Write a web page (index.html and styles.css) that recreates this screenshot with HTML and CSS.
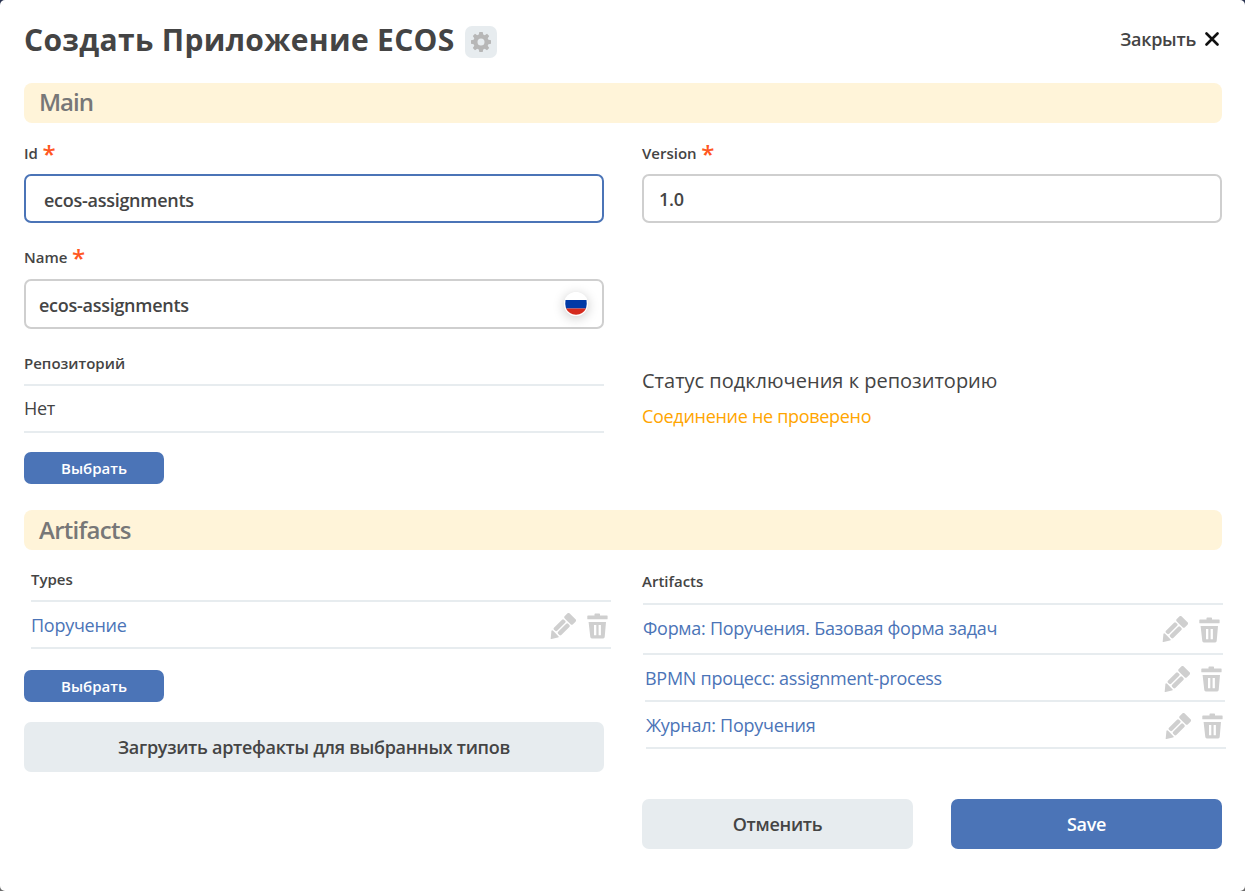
FILE: index.html
```
<!DOCTYPE html>
<html lang="ru">
<head>
<meta charset="utf-8">
<title>Создать Приложение ECOS</title>
<link rel="stylesheet" href="styles.css">
</head>
<body>
<svg class="sprite" width="0" height="0">
  <symbol id="pencil" viewBox="0 0 26 26">
    <g transform="translate(0 26) rotate(-45)" fill="currentColor">
      <path d="M.8.2 6.6-4.6Q8-5.400 8-3.600V3.600Q8 5.400 6.600 4.600L.8.9Q.3.5.8.2Z"/>
      <rect x="9.400" y="-5.200" width="14.200" height="4.500" rx="1.400"/>
      <rect x="9.400" y=".7" width="14.200" height="4.500" rx="1.400"/>
      <rect x="25" y="-5.800" width="7" height="11.600" rx="1.700"/>
    </g>
  </symbol>
  <symbol id="trash" viewBox="0 0 21 26">
    <path fill="currentColor" fill-rule="evenodd" d="M1 2.500H7.500V1.200Q7.500.5 8.200.5H12.300Q13 .5 13 1.200V2.500H20Q20.600 2.500 20.600 3.100V5.700Q20.600 6.300 20 6.300H.9Q.3 6.300.3 5.700V3.100Q.3 2.500 1 2.500ZM1.600 9H19L17.700 24Q17.500 25.400 16.200 25.400H4.800Q3.500 25.400 3.300 24ZM7 12V22.300H9.300V12ZM11.600 12V22.300H13.900V12Z"/>
  </symbol>
</svg>
<main class="modal">
  <header class="header">
    <h1 class="title">Создать Приложение ECOS</h1>
    <button class="gear" aria-label="Настройки">
      <svg width="20" height="20" viewBox="0 0 20 20"><path fill="#b7b7b7" fill-rule="evenodd" d="M8.3 0h3.4l.5 2.6 1.6.7L16 1.8 18.2 4 16.7 6.200l.7 1.600 2.600.5v3.400l-2.600.5-.7 1.600L18.200 16 16 18.200l-2.200-1.500-1.600.7-.5 2.600H8.300l-.5-2.600-1.600-.7L4 18.200 1.800 16l1.500-2.200-.7-1.600L0 11.700V8.300l2.600-.5.7-1.600L1.800 4 4 1.800l2.200 1.500 1.600-.7ZM10 6.500a3.500 3.500 0 1 0 0 7 3.500 3.500 0 1 0 0-7Z"/></svg>
    </button>
    <button class="close">Закрыть
      <svg width="14" height="14" viewBox="0 0 14 14"><path d="M1.500 1.500 12.500 12.500M12.500 1.500 1.500 12.500" stroke="#111" stroke-width="2.600" stroke-linecap="round"/></svg>
    </button>
  </header>

  <h2 class="section section-main">Main</h2>
  <div class="columns columns-main">
    <div class="col">
      <div class="label">Id <span class="req">*</span></div>
      <div class="input input-focus">ecos-assignments</div>
      <div class="label label-name">Name <span class="req">*</span></div>
      <div class="input input-name">ecos-assignments
        <svg class="flag" width="24" height="24" viewBox="0 0 24 24"><circle cx="12" cy="12" r="12" fill="#fff"/><path fill="#0039a6" d="M1.500 8H22.500Q23.300 12.500 22 16.500H2Q.7 12.500 1.500 8Z"/><path fill="#d52b1e" d="M2 16.500H22Q19 22.600 12 22.700 5 22.600 2 16.500Z"/></svg>
      </div>
      <div class="label label-repo">Репозиторий</div>
      <div class="list"><div class="row row-repo">Нет</div></div>
      <button class="btn btn-small">Выбрать</button>
    </div>
    <div class="col">
      <div class="label">Version <span class="req">*</span></div>
      <div class="input input-version">1.0</div>
      <div class="status">
        <div class="status-title">Статус подключения к репозиторию</div>
        <div class="status-value">Соединение не проверено</div>
      </div>
    </div>
  </div>

  <h2 class="section">Artifacts</h2>
  <div class="columns">
    <div class="col">
      <div class="types">
        <div class="label label-types">Types</div>
        <div class="list">
          <div class="row link"><span class="row-text">Поручение</span><svg class="pencil"><use href="#pencil"/></svg><svg class="trash"><use href="#trash"/></svg></div>
        </div>
      </div>
      <button class="btn btn-small btn-types">Выбрать</button>
      <button class="btn btn-wide">Загрузить артефакты для выбранных типов</button>
    </div>
    <div class="col">
      <div class="label label-artifacts">Artifacts</div>
      <div class="list artifacts">
        <div class="row row-first link"><span class="row-text">Форма: Поручения. Базовая форма задач</span><svg class="pencil"><use href="#pencil"/></svg><svg class="trash"><use href="#trash"/></svg></div>
        <div class="row row-second link"><span class="row-text">BPMN процесс: assignment-process</span><svg class="pencil"><use href="#pencil"/></svg><svg class="trash"><use href="#trash"/></svg></div>
        <div class="row row-third link"><span class="row-text">Журнал: Поручения</span><svg class="pencil"><use href="#pencil"/></svg><svg class="trash"><use href="#trash"/></svg></div>
      </div>
      <div class="footer">
        <button class="btn btn-cancel">Отменить</button>
        <button class="btn btn-save">Save</button>
      </div>
    </div>
  </div>
</main>
</body>
</html>
```
FILE: styles.css
```
* { box-sizing: border-box; }
body { margin: 0; background: linear-gradient(#2a3350 50%, #6b6b6b 50%); color: #444; font-family: "Open Sans", sans-serif; }
button { font-family: inherit; border: 0; padding: 0; color: inherit; background: none; }
svg { display: block; flex: none; }
.sprite { position: absolute; }
.modal { height: 891px; padding: 0 23px 0 24px; background: #fff; border-radius: 5px; overflow: hidden; }

.header { display: flex; height: 83px; }
.title { margin: 18px 0 0; font-size: 30px; line-height: 43px; font-weight: 700; letter-spacing: .32px; white-space: nowrap; }
.gear { display: flex; align-items: center; justify-content: center; width: 32px; height: 32px; margin: 26px 0 0 10px; border-radius: 7px; background: #e7ecef; }
.close { display: flex; align-items: center; gap: 9px; height: 24px; margin: 27px 3px 0 auto; font-size: 18px; font-weight: 600; letter-spacing: -.25px; }

.section { height: 40px; margin: 0; padding-left: 15px; border-radius: 8px; background: #fff4d9; color: #777; font-size: 24px; line-height: 39px; font-weight: 600; letter-spacing: -.7px; }
.section-main { line-height: 38px; letter-spacing: -1px; }
.columns { display: grid; grid-template-columns: 580px 580px; column-gap: 38px; }
.columns-main { height: 387px; }
.col { display: flex; flex-direction: column; min-width: 0; }

.label { height: 20px; margin: 20px 0 11px; font-size: 15px; line-height: 20px; font-weight: 600; white-space: nowrap; }
.req { margin-left: .6px; color: #ff5722; font-size: 24px; line-height: 0; vertical-align: -4px; }
.label-name { margin: 24px 0 12px; }
.label-repo { margin: 24px 0 11px; }
.label-types { margin: 19px 0 11px; }
.label-artifacts { margin: 21px 0 12px; }

.input { display: flex; align-items: center; justify-content: space-between; height: 49px; padding: 3px 15px 0 18px; border: 2px solid #cfcfcf; border-radius: 7px; font-size: 18px; font-weight: 600; letter-spacing: -.27px; }
.input-focus { border-color: #4b74b7; }
.input-version { padding: 1px 15px 0; }
.input-name { height: 50px; padding: 2px 14.500px 0 13px; }
.flag { margin-bottom: 3px; border-radius: 50%; box-shadow: 0 2px 12px rgba(0, 0, 0, .22); }

.list { border-top: 2px solid #e7ecef; }
.row { display: flex; align-items: center; height: 47px; border-bottom: 2px solid #e7ecef; font-size: 18px; letter-spacing: -.27px; }
.row-repo { padding-bottom: 2px; }
.row-text { flex: 1; }
.link { color: #4b74b7; }
.pencil { width: 26px; height: 26px; margin: 2px 11px 0 0; color: #cfcfcf; }
.trash { width: 21px; height: 26px; margin: 3px 3px 0 0; color: #cfcfcf; }
.types { margin: 0 -7px 0 7px; }
.artifacts { width: 580px; margin-left: 1px; }
.row-first { height: 50px; width: 580px; padding-bottom: 2px; }
.row-second { width: 580px; margin-left: 2px; }
.row-third { width: 580px; margin-left: 3px; }

.status { margin-top: 144px; }
.status-title { font-size: 20px; line-height: 28px; }
.status-value { margin-top: 8px; color: #ffa500; font-size: 18px; line-height: 26px; letter-spacing: -.3px; }

.btn { display: block; border-radius: 7px; font-size: 18px; font-weight: 600; letter-spacing: -.29px; }
.btn-small { width: 140px; height: 32px; margin-top: 19px; background: #4b74b7; color: #fff; font-size: 15px; letter-spacing: 0; }
.btn-types { margin-top: 21px; }
.btn-wide { height: 50px; margin-top: 20px; background: #e7ecef; }
.footer { display: grid; grid-template-columns: 271px 271px; column-gap: 38px; margin-top: 50px; }
.btn-cancel { height: 50px; background: #e7ecef; }
.btn-save { height: 50px; background: #4b74b7; color: #fff; }
```
